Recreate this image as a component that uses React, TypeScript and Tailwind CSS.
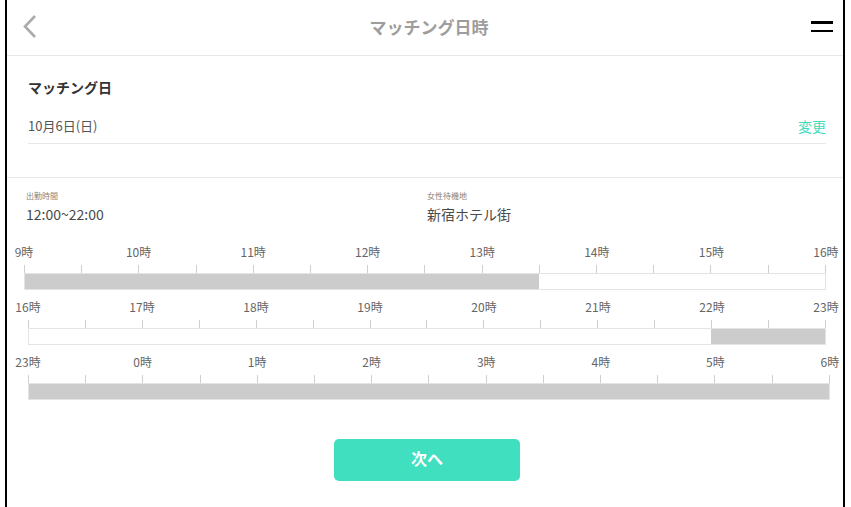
const font = { fontFamily: '"Noto Sans CJK JP", "Noto Sans", sans-serif' };

type Row = {
  labels: string[];
  from: number;
  to: number;
  inset: string;
};

const rows: Row[] = [
  { labels: ["9時", "10時", "11時", "12時", "13時", "14時", "15時", "16時"], from: 0, to: 4.5, inset: "ml-[17px] mr-[17px]" },
  { labels: ["16時", "17時", "18時", "19時", "20時", "21時", "22時", "23時"], from: 6, to: 7, inset: "ml-[21px] mr-[17px]" },
  { labels: ["23時", "0時", "1時", "2時", "3時", "4時", "5時", "6時"], from: 0, to: 7, inset: "ml-[21px] mr-[13px]" },
];

function Timeline({ row }: { row: Row }) {
  const ticks = Array.from({ length: 15 });
  return (
    <div className={`${row.inset} mb-[9px]`}>
      <div className="flex justify-between h-[16px] text-[12px] leading-[16px] text-[#666]">
        {row.labels.map((l) => (
          <div key={l} className="w-0 flex justify-center whitespace-nowrap">
            {l}
          </div>
        ))}
      </div>
      <div className="mt-[5px] flex justify-between h-[8px]">
        {ticks.map((_, i) => (
          <div key={i} className="w-px h-full bg-[#cfcfcf]" />
        ))}
      </div>
      <div className="h-[17px] border border-[#e4e4e4] bg-white flex">
        <div style={{ width: `${(row.from / 7) * 100}%` }} />
        <div className="h-full bg-[#cccccc]" style={{ width: `${((row.to - row.from) / 7) * 100}%` }} />
      </div>
    </div>
  );
}

export default function App() {
  return (
    <div className="w-[851px] h-[507px] bg-white overflow-hidden" style={font}>
      <div className="ml-[5px] w-[840px] h-full border-x-2 border-black flex flex-col">
        {/* header */}
        <div className="h-[56px] border-b border-[#e8e8e8] grid grid-cols-[1fr_auto_1fr] items-center pl-[15px] pr-[10px]">
          <svg width="16" height="25" viewBox="0 0 16 25" className="-mt-[2px]">
            <polyline points="13,2 3,12.5 13,23" fill="none" stroke="#ababab" strokeWidth="2.6" />
          </svg>
          <p className="text-[17px] font-bold text-[#9d9d9d] leading-none -mt-[3px] ml-[3px]">マッチング日時</p>
          <div className="flex justify-end">
            <div className="w-[22px] flex flex-col gap-[6px] -mt-[2px]">
              <div className="h-[2.5px] bg-black" />
              <div className="h-[2.5px] bg-black" />
            </div>
          </div>
        </div>

        {/* matching day */}
        <div className="border-b border-[#e8e8e8] pl-[21px] pr-[17px] pt-[21px] pb-[33px]">
          <p className="text-[14px] leading-[20px] font-bold text-[#333]">マッチング日</p>
          <div className="mt-[19px] pb-[7px] border-b border-[#e8e8e8] flex justify-between items-center text-[13px] leading-[20px]">
            <span className="text-[#555]">10月6日(日)</span>
            <span className="text-[14px] text-[#3fdcbc]">変更</span>
          </div>
        </div>

        {/* info */}
        <div className="grid grid-cols-2 px-[19px] pt-[12px]">
          <div>
            <p className="text-[8px] leading-[12px] text-[#8b8478]">出勤時間</p>
            <p className="mt-[2px] text-[14px] leading-[20px] text-[#4a4a4a]">12:00~22:00</p>
          </div>
          <div className="pl-[2px]">
            <p className="text-[8px] leading-[12px] text-[#8b8478]">女性待機地</p>
            <p className="mt-[2px] text-[14px] leading-[20px] text-[#4a4a4a]">新宿ホテル街</p>
          </div>
        </div>

        {/* timelines */}
        <div className="mt-[20px]">
          {rows.map((r, i) => (
            <Timeline key={i} row={r} />
          ))}
        </div>

        <div className="flex justify-center mt-[30px] pl-[4px]">
          <button className="w-[186px] h-[42px] rounded-[5px] bg-[#3fdfbf] text-white text-[16px] leading-none font-bold pb-[5px]">
            次へ
          </button>
        </div>
      </div>
    </div>
  );
}
